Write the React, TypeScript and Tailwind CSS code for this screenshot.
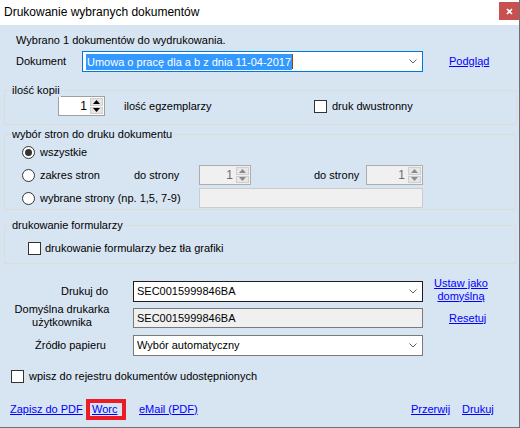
import clsx from 'clsx'

function Chevron() {
  return (
    <svg width="8" height="5" viewBox="0 0 8 5" className="shrink-0">
      <polyline points="0.5,0.5 4,4 7.5,0.5" fill="none" stroke="#606060" strokeWidth="1" />
    </svg>
  )
}

function Arrow({ up, color }: { up?: boolean; color: string }) {
  return (
    <svg width="7" height="4" viewBox="0 0 7 4">
      <polygon points={up ? '0,4 3.5,0 7,4' : '0,0 3.5,4 7,0'} fill={color} />
    </svg>
  )
}

function Spinner({ w, disabled }: { w: string; disabled?: boolean }) {
  const arrow = disabled ? '#8a8a8a' : '#000000'
  return (
    <div
      className={clsx(
        'flex h-[20px] border shrink-0',
        w,
        disabled ? 'bg-[#f0f0f0] border-[#adadad] text-[#6d6d6d]' : 'bg-white border-[#a0a0a0] text-black'
      )}
    >
      <div className="flex-1 flex items-center justify-end pr-[2px] text-[12px]">1</div>
      <div className="w-[15px] flex flex-col gap-[1px] p-[1px]">
        <div className="flex-1 bg-[#e6e6e6] border border-[#cfcfcf] flex items-center justify-center">
          <Arrow up color={arrow} />
        </div>
        <div className="flex-1 bg-[#e6e6e6] border border-[#cfcfcf] flex items-center justify-center">
          <Arrow color={arrow} />
        </div>
      </div>
    </div>
  )
}

function Combo({ text, border }: { text: string; border: string }) {
  return (
    <div className={clsx('w-[290px] h-[21px] border bg-white flex items-center justify-between pl-[3px] pr-[5px]', border)}>
      <span>{text}</span>
      <Chevron />
    </div>
  )
}

function Radio({ checked }: { checked?: boolean }) {
  return (
    <div className="w-[13px] h-[13px] rounded-full border border-[#333333] bg-white flex items-center justify-center shrink-0">
      {checked && <div className="w-[7px] h-[7px] rounded-full bg-[#333333]" />}
    </div>
  )
}

function Check() {
  return <div className="w-[13px] h-[13px] border border-[#333333] bg-white shrink-0" />
}

function Link({ children }: { children: React.ReactNode }) {
  return <span className="text-[#0000ff] underline underline-offset-[1px]">{children}</span>
}

export default function App() {
  return (
    <div className="w-[520px] h-[428px] bg-[#d7e4f2] border-r border-b border-[#707070] flex flex-col overflow-hidden text-[11px] leading-[13px] text-black font-['Liberation_Sans',Arial,sans-serif]">
      {/* title bar */}
      <div className="h-[25px] bg-white flex justify-between shrink-0">
        <div className="pl-[4px] pt-[5px] text-[12px] leading-[15px]">Drukowanie wybranych dokumentów</div>
        <div className="mt-[2px] w-[20px] h-[18px] bg-[#c75050] flex items-center justify-center">
          <svg width="7" height="7" viewBox="0 0 7 7">
            <path d="M1 1 L6 6 M6 1 L1 6" stroke="white" strokeWidth="1.6" />
          </svg>
        </div>
      </div>

      <div className="mt-[8px] h-[14px] pl-[16px] leading-[14px]">Wybrano 1 dokumentów do wydrukowania.</div>

      {/* dokument */}
      <div className="mt-[4px] h-[21px] flex items-center">
        <div className="w-[82px] pl-[16px]">Dokument</div>
        <div className="w-[341px] h-[21px] border border-[#0078d7] bg-white flex items-center justify-between pl-[3px] pr-[5px]">
          <div className="flex items-center">
            <span className="bg-[#3399ff] text-white leading-[16px] px-[1px]">Umowa o pracę dla a b z dnia 11-04-2017</span>
            <span className="w-[1px] h-[15px] bg-[#8a4a10]" />
          </div>
          <Chevron />
        </div>
        <div className="ml-[26px]">
          <Link>Podgląd</Link>
        </div>
      </div>

      {/* ilość kopii */}
      <div className="mt-[18px] ml-[4px] w-[513px] h-[35px] border border-[#dcdcdc] relative shrink-0">
        <span className="absolute left-[6px] top-[-7px] px-[1px] bg-[#d7e4f2]">ilość kopii</span>
        <div className="mt-[5px] h-[20px] flex items-center">
          <div className="ml-[53px]">
            <Spinner w="w-[47px]" />
          </div>
          <div className="ml-[19px] w-[190px]">ilość egzemplarzy</div>
          <Check />
          <div className="ml-[5px]">druk dwustronny</div>
        </div>
      </div>

      {/* wybór stron */}
      <div className="mt-[9px] ml-[4px] w-[512px] h-[76px] border border-[#dcdcdc] relative shrink-0">
        <span className="absolute left-[6px] top-[-7px] px-[1px] bg-[#d7e4f2]">wybór stron do druku dokumentu</span>
        <div className="mt-[7px] h-[20px] flex items-center pl-[17px]">
          <Radio checked />
          <div className="ml-[5px]">wszystkie</div>
        </div>
        <div className="mt-[3px] h-[20px] flex items-center pl-[17px]">
          <Radio />
          <div className="ml-[5px] w-[94px]">zakres stron</div>
          <div className="w-[65px]">do strony</div>
          <Spinner w="w-[52px]" disabled />
          <div className="ml-[63px] w-[52px]">do strony</div>
          <Spinner w="w-[57px]" disabled />
        </div>
        <div className="mt-[3px] h-[20px] flex items-center pl-[17px]">
          <Radio />
          <div className="ml-[5px] w-[159px]">wybrane strony (np. 1,5, 7-9)</div>
          <div className="w-[224px] h-[20px] bg-[#f0f0f0] border border-[#cccccc]" />
        </div>
      </div>

      {/* drukowanie formularzy */}
      <div className="mt-[15px] ml-[4px] w-[512px] h-[39px] border border-[#dcdcdc] relative shrink-0">
        <span className="absolute left-[6px] top-[-7px] px-[1px] bg-[#d7e4f2]">drukowanie formularzy</span>
        <div className="mt-[12px] h-[20px] flex items-center pl-[23px]">
          <Check />
          <div className="ml-[4px]">drukowanie formularzy bez tła grafiki</div>
        </div>
      </div>

      {/* drukarka */}
      <div className="mt-[17px] h-[21px] flex items-center">
        <div className="w-[133px] pl-[61px]">Drukuj do</div>
        <Combo text="SEC0015999846BA" border="border-[#1e1e1e]" />
        <div className="ml-[11px] w-[54px] text-center mb-[4px] text-[#0000ff] underline underline-offset-[1px]">
          <div>Ustaw jako</div>
          <div>domyślną</div>
        </div>
      </div>
      <div className="mt-[6px] h-[20px] flex items-center">
        <div className="w-[133px] pl-[14px]">
          <div className="w-[96px] text-center mb-[5px]">
            <div>Domyślna drukarka</div>
            <div>użytkownika</div>
          </div>
        </div>
        <div className="w-[290px] h-[20px] bg-[#f0f0f0] border border-[#7a7a7a] flex items-center pl-[3px]">SEC0015999846BA</div>
        <div className="ml-[26px]">
          <Link>Resetuj</Link>
        </div>
      </div>
      <div className="mt-[7px] h-[20px] flex items-center">
        <div className="w-[133px] pl-[35px]">Źródło papieru</div>
        <Combo text="Wybór automatyczny" border="border-[#7a7a7a]" />
      </div>

      <div className="mt-[11px] h-[20px] flex items-center pl-[11px]">
        <Check />
        <div className="ml-[5px]">wpisz do rejestru dokumentów udostępnionych</div>
      </div>

      {/* bottom links */}
      <div className="mt-[13px] h-[21px] flex items-center">
        <div className="ml-[10px] w-[76px]">
          <Link>Zapisz do PDF</Link>
        </div>
        <div className="w-[40px] h-[21px] border-[4px] border-[#ec1c24] flex items-center pl-[2px]">
          <Link>Worc</Link>
        </div>
        <div className="ml-[13px]">
          <Link>eMail (PDF)</Link>
        </div>
        <div className="ml-auto w-[51px]">
          <Link>Przerwij</Link>
        </div>
        <div className="w-[57px]">
          <Link>Drukuj</Link>
        </div>
      </div>
    </div>
  )
}
